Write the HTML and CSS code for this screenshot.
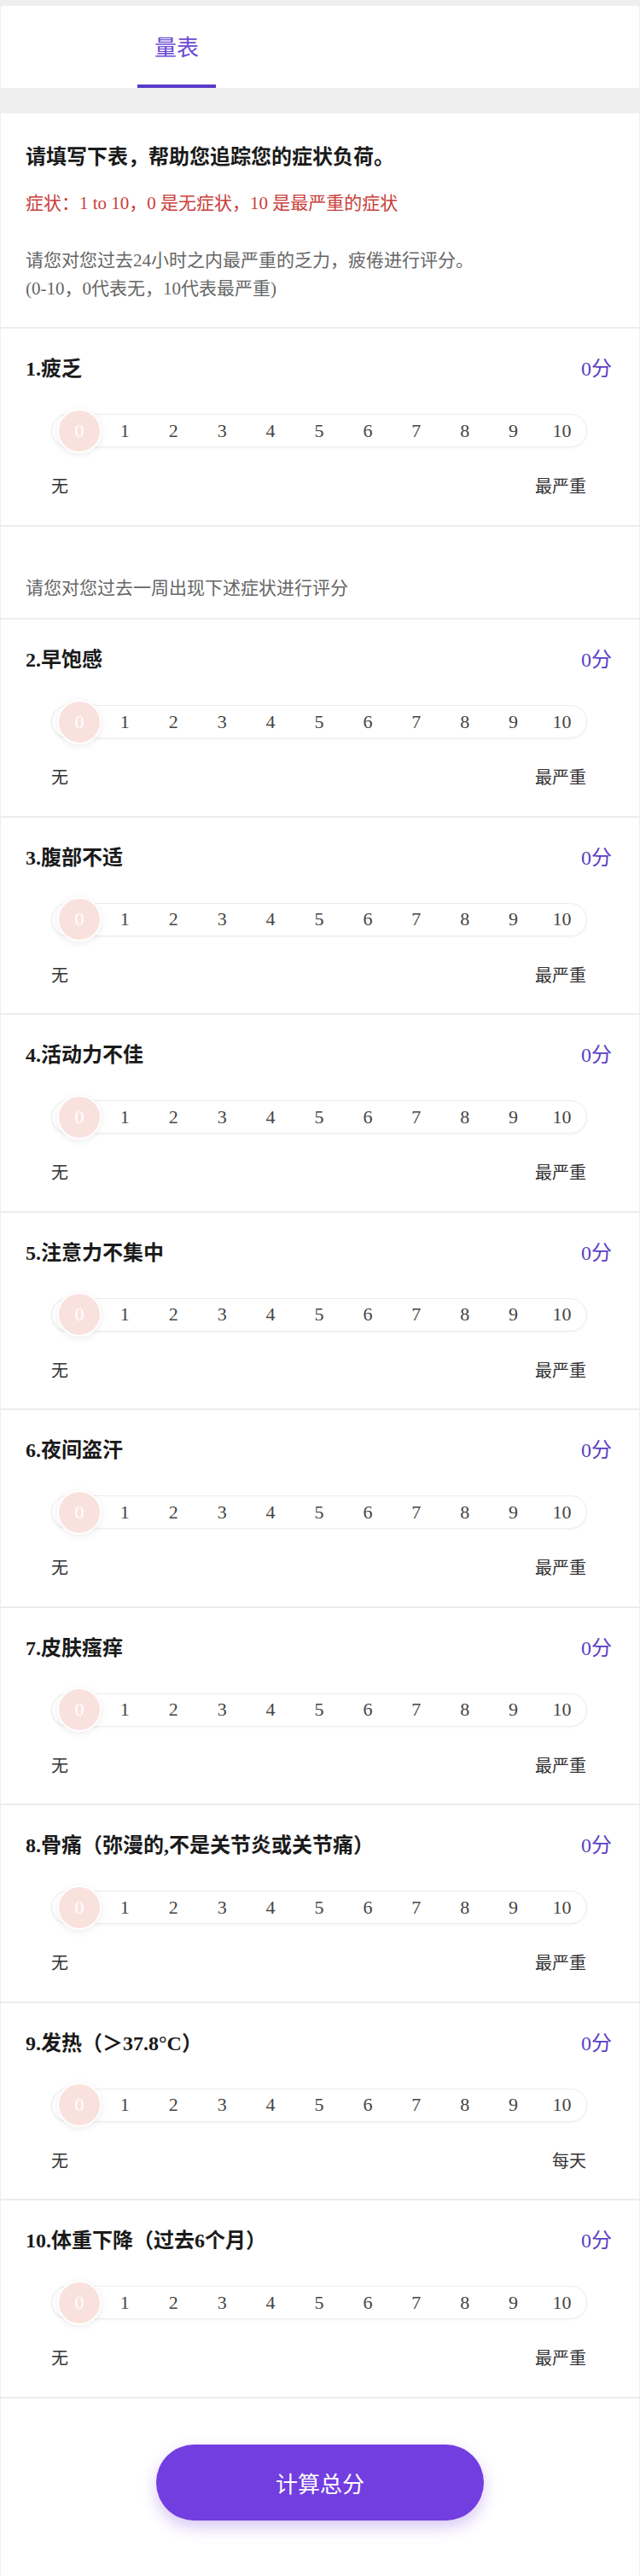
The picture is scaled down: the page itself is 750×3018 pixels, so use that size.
FILE: index.html
```html
<!DOCTYPE html>
<html lang="zh-CN">
<head>
    <meta charset="UTF-8">
    <meta name="viewport" content="width=device-width, initial-scale=1.0">
    <title>量表</title>
    <link rel="stylesheet" href="styles.css">
</head>
<body>
    <div class="page">
        <nav class="tabs">
            <div class="tab active">量表</div>
        </nav>
        <section class="card intro">
            <h2 class="intro-title">请填写下表，帮助您追踪您的症状负荷。</h2>
            <p class="intro-warn">症状：1 to 10，0 是无症状，10 是最严重的症状</p>
            <p class="intro-tip">请您对您过去24小时之内最严重的乏力，疲倦进行评分。<br>(0-10，0代表无，10代表最严重)</p>
        </section>
        <div id="firstList"></div>
        <section class="card note">请您对您过去一周出现下述症状进行评分</section>
        <div id="restList"></div>
        <section class="card footer">
            <button class="calc-btn" onclick="calcTotal()">计算总分</button>
        </section>
    </div>
    <script>
        const items = [
            { title: '1.疲乏', max: '最严重' },
            { title: '2.早饱感', max: '最严重' },
            { title: '3.腹部不适', max: '最严重' },
            { title: '4.活动力不佳', max: '最严重' },
            { title: '5.注意力不集中', max: '最严重' },
            { title: '6.夜间盗汗', max: '最严重' },
            { title: '7.皮肤瘙痒', max: '最严重' },
            { title: '8.骨痛（弥漫的,不是关节炎或关节痛）', max: '最严重' },
            { title: '9.发热（＞37.8°C）', max: '每天' },
            { title: '10.体重下降（过去6个月）', max: '最严重' }
        ];

        function itemHtml(item, index) {
            let ticks = '';
            for (let i = 0; i <= 10; i++) {
                ticks += `<span class="tick" onclick="setScore(${index}, ${i})">${i}</span>`;
            }
            return `
                <section class="card item">
                    <div class="item-head">
                        <span class="item-title">${item.title}</span>
                        <span class="item-score" id="score${index}">0分</span>
                    </div>
                    <div class="slider">
                        <div class="track">${ticks}</div>
                        <div class="thumb" id="thumb${index}">0</div>
                    </div>
                    <div class="slider-labels">
                        <span>无</span>
                        <span>${item.max}</span>
                    </div>
                </section>
            `;
        }

        function setScore(index, value) {
            const thumb = document.getElementById('thumb' + index);
            thumb.textContent = value;
            thumb.style.left = (7 + value * 57) + 'px';
            document.getElementById('score' + index).textContent = value + '分';
        }

        function calcTotal() {
            let total = 0;
            items.forEach((item, index) => {
                total += parseInt(document.getElementById('score' + index).textContent);
            });
            alert('总分：' + total);
        }

        document.getElementById('firstList').innerHTML = itemHtml(items[0], 0);
        document.getElementById('restList').innerHTML = items.slice(1).map((item, i) => itemHtml(item, i + 1)).join('');
    </script>
</body>
</html>
```

FILE: styles.css
```css
body {
    margin: 0;
    padding: 0;
    background-color: #efefef;
    font-family: "Liberation Serif", "Noto Sans CJK SC", serif;
    color: #222;
}
.page {
    padding-top: 7px;
}
.tabs {
    display: flex;
    height: 96px;
    margin: 0 1px 30px;
    background-color: #fff;
}
.tab {
    box-sizing: border-box;
    width: 92px;
    height: 96px;
    margin-left: 160px;
    padding-top: 29px;
    font-family: "Noto Sans CJK SC", sans-serif;
    font-size: 26px;
    line-height: 36px;
    text-align: center;
    color: #6a4bd2;
}
.tab.active {
    border-bottom: 4px solid #5a3bc9;
}
.card {
    margin: 0 1px;
    background-color: #fff;
    border-top: 2px solid #ececec;
}
.intro {
    border-top: none;
    padding: 32px 30px 28.5px 29px;
}
.intro-title {
    margin: 0;
    font-family: "Noto Sans CJK SC", sans-serif;
    font-size: 24px;
    line-height: 34px;
    font-weight: bold;
    color: #1a1a1a;
}
.intro-warn {
    margin: 23px 0 0;
    font-size: 21px;
    line-height: 32px;
    color: #c9403b;
}
.intro-tip {
    margin: 34.5px 0 0;
    font-size: 21px;
    line-height: 33px;
    color: #666;
}
.note {
    padding: 54px 30px 20.5px 29px;
    font-family: "Noto Sans CJK SC", sans-serif;
    font-size: 21px;
    line-height: 33px;
    color: #666;
}
.item {
    padding: 30px 0 31.5px;
}
.item-head {
    display: flex;
    justify-content: space-between;
    padding: 0 32px 0 29px;
    line-height: 34px;
}
.item-title {
    font-size: 24px;
    font-weight: bold;
    color: #1a1a1a;
}
.item-score {
    font-size: 24px;
    color: #5b3fc4;
}
.slider {
    position: relative;
    margin: 36px 61px 0 59px;
}
.track {
    box-sizing: border-box;
    display: flex;
    align-items: center;
    height: 39px;
    border: 1px solid #ededed;
    border-radius: 20px;
    background-color: #fff;
    box-shadow: 0 1px 3px rgba(0, 0, 0, 0.05);
}
.tick {
    flex: 1;
    text-align: center;
    font-size: 22px;
    color: #444;
    cursor: pointer;
}
.thumb {
    position: absolute;
    top: 50%;
    left: 7px;
    box-sizing: border-box;
    width: 52px;
    height: 52px;
    margin-top: -26px;
    border: 2px solid #fff;
    border-radius: 50%;
    background-color: #f9e2de;
    box-shadow: 0 2px 8px rgba(0, 0, 0, 0.08);
    color: #fff;
    font-size: 22px;
    line-height: 48px;
    text-align: center;
}
.slider-labels {
    display: flex;
    justify-content: space-between;
    margin: 31px 62px 0 59px;
    font-family: "Noto Sans CJK SC", sans-serif;
    font-size: 20px;
    line-height: 28px;
    color: #333;
}
.footer {
    padding: 54.5px 0 65px;
    text-align: center;
}
.calc-btn {
    width: 384px;
    height: 89px;
    border: none;
    border-radius: 45px;
    background-color: #733ee0;
    box-shadow: 0 8px 18px rgba(115, 62, 224, 0.28);
    color: #fff;
    font-family: "Noto Sans CJK SC", sans-serif;
    font-size: 26px;
    cursor: pointer;
}
.calc-btn:hover {
    background-color: #6934d6;
}
```
